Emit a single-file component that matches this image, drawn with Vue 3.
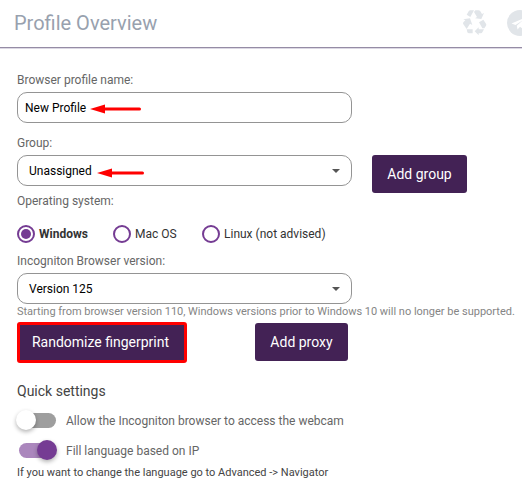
<script setup>
import { ref } from 'vue'

const profileName = ref('New Profile')
const selectedOs = ref('windows')

const systems = [
  { id: 'windows', label: 'Windows' },
  { id: 'mac', label: 'Mac OS' },
  { id: 'linux', label: 'Linux (not advised)' },
]

const settings = ref([
  { id: 'webcam', label: 'Allow the Incogniton browser to access the webcam', on: false },
  { id: 'language', label: 'Fill language based on IP', on: true },
])
</script>

<template>
  <div class="profile-page">
    <header class="page-header">
      <h1 class="page-title">Profile Overview</h1>
      <div class="header-icons">
        <svg class="header-icon" width="26" height="26" viewBox="0 0 78 78">
          <path d="M14 14 20 4Q22 1 25 1H36L25 21ZM40 1H49Q53 1 55 4L60 12 66 9 58 27 39 25 45 21 36 6Z" />
          <path d="M4 28 24 25 31 45 24 41 14 57 4 43Q2 40 4 37L10 31ZM51 37 64 29 72 41Q74 44 72 47L67 55H61Z" />
          <path d="M14 58H32V70H21Q18 70 16 67ZM38 64 50 52V58H66L61 67Q60 70 57 70H50V76Z" />
        </svg>
        <svg class="header-icon" width="26" height="26" viewBox="0 0 26 26">
          <circle cx="13" cy="13" r="13" />
          <path class="plane" d="M4.500 13.500 20 7 17.500 20 13 16.800 10.500 19.500 9.800 15.800 16 10 8.500 15Z" />
        </svg>
      </div>
    </header>

    <main class="profile-form">
      <label class="field-label name-label">Browser profile name:</label>
      <div class="field name-field">
        <span>{{ profileName }}</span>
        <svg class="arrow" width="52" height="10" viewBox="0 0 52 10">
          <path d="M0 5 15 .5V9.500Z" />
          <path d="M14 3.500H49.500a1.500 1.500 0 0 1 0 3H14Z" />
        </svg>
      </div>

      <div class="group-row">
        <div>
          <label class="field-label group-label">Group:</label>
          <div class="field select-field">
            <span>Unassigned</span>
            <svg class="arrow" width="48" height="10" viewBox="0 0 48 10">
              <path d="M0 5 15 .5V9.500Z" />
              <path d="M14 3.500H45.500a1.500 1.500 0 0 1 0 3H14Z" />
            </svg>
            <span class="caret"></span>
          </div>
        </div>
        <button class="btn group-btn">Add group</button>
      </div>

      <label class="field-label">Operating system:</label>
      <div class="os-list">
        <div
          v-for="os in systems"
          :key="os.id"
          class="os-option"
          :class="[`os-option--${os.id}`, { 'os-option--active': selectedOs === os.id }]"
          @click="selectedOs = os.id"
        >
          <span class="radio"></span>
          <span class="os-name">{{ os.label }}</span>
        </div>
      </div>

      <label class="field-label version-label">Incogniton Browser version:</label>
      <div class="field select-field">
        <span>Version 125</span>
        <span class="caret"></span>
      </div>
      <p class="hint">
        Starting from browser version 110, Windows versions prior to Windows 10 will no longer be supported.
      </p>

      <div class="actions">
        <button class="btn btn--outlined">Randomize fingerprint</button>
        <button class="btn proxy-btn">Add proxy</button>
      </div>

      <h2 class="section-title">Quick settings</h2>
      <div
        v-for="item in settings"
        :key="item.id"
        class="setting"
        @click="item.on = !item.on"
      >
        <span class="toggle" :class="{ 'toggle--on': item.on }">
          <span class="knob"></span>
        </span>
        <span class="setting-label">{{ item.label }}</span>
      </div>
      <p class="note">If you want to change the language go to Advanced -&gt; Navigator</p>
    </main>
  </div>
</template>

<style>
body {
  background: #fff;
  overflow: hidden;
}
</style>

<style scoped>
.profile-page {
  width: 522px;
  height: 495px;
  overflow: hidden;
  background: #fff;
  font-family: Roboto, "Liberation Sans", sans-serif;
  font-size: 12px;
  color: #333;
}

.profile-page * {
  box-sizing: border-box;
  white-space: nowrap;
}

.page-header {
  display: flex;
  justify-content: space-between;
  height: 49px;
  border-bottom: 1px solid #dcd8e4;
  box-shadow: inset 0 -1px #958ca5;
}

.page-title {
  margin: 0 0 0 14px;
  font-size: 20px;
  font-weight: 400;
  line-height: 46px;
  color: #98a1ae;
}

.header-icons {
  display: flex;
  gap: 19px;
  width: 60px;
  padding-top: 10px;
}

.header-icon {
  flex: none;
  fill: #e1e5e9;
}

.plane {
  fill: #fff;
}

.profile-form {
  padding: 23px 0 0 17px;
}

.field-label {
  display: block;
  height: 16px;
  line-height: 16px;
  color: #666;
}

.name-label {
  margin-bottom: 4px;
}

.field {
  display: flex;
  align-items: center;
  width: 335px;
  height: 31px;
  padding: 0 11px 0 7px;
  border: 1px solid #949494;
  border-radius: 10px;
  color: #000;
}

.select-field {
  padding-left: 11px;
}

.arrow {
  margin: 3px 0 0 4px;
  fill: #f00;
}

.select-field .arrow {
  margin: 5px 0 0 5px;
}

.caret {
  margin-left: auto;
  border: 4px solid transparent;
  border-top-color: #555;
  border-bottom: 0;
}

.group-row {
  display: flex;
  align-items: flex-start;
  gap: 20px;
  padding-top: 12px;
}

.group-label {
  margin-bottom: 4px;
}

.btn {
  height: 38px;
  padding: 0;
  border: 0;
  border-radius: 3px;
  background: #432255;
  color: #fff;
  font-family: inherit;
  font-size: 14px;
}

.group-btn {
  width: 95px;
  margin-top: 20px;
}

.os-list {
  display: flex;
  height: 18px;
  margin-top: 16px;
}

.os-option {
  display: flex;
  align-items: center;
  gap: 4px;
}

.os-option--windows {
  width: 96px;
}

.os-option--mac {
  width: 89px;
}

.radio {
  display: grid;
  place-items: center;
  width: 18px;
  height: 18px;
  border: 2px solid #753c93;
  border-radius: 50%;
}

.os-option--active .radio::after {
  content: '';
  width: 10px;
  height: 10px;
  border-radius: 50%;
  background: #753c93;
}

.os-option--active .os-name {
  font-weight: 700;
}

.version-label {
  margin: 10px 0 4px;
}

.hint {
  margin: 0;
  height: 18px;
  font-size: 11px;
  line-height: 16px;
  letter-spacing: -0.01px;
  color: #858585;
}

.actions {
  display: flex;
  align-items: flex-start;
  gap: 68px;
  height: 41px;
}

.btn--outlined {
  width: 170px;
  height: 41px;
  padding: 0 3px 2px 0;
  border: 3px solid #f00;
}

.proxy-btn {
  width: 93px;
  margin-top: 1px;
}

.section-title {
  margin: 18px 0 18px;
  font-size: 14px;
  font-weight: 400;
  line-height: 20px;
  color: #444;
}

.setting {
  display: flex;
  align-items: center;
  height: 14px;
  margin: -6px 0 22px;
}

.toggle {
  display: flex;
  align-items: center;
  width: 37px;
  height: 15px;
  margin: 0 10px 0 2px;
  border-radius: 8px;
  background: #9e9e9e;
}

.toggle--on {
  justify-content: flex-end;
  background: #ab87bd;
}

.knob {
  flex: none;
  width: 20px;
  height: 20px;
  margin-left: -3px;
  border-radius: 50%;
  background: #fff;
  box-shadow: 0 2px 4px rgba(0, 0, 0, 0.3);
}

.toggle--on .knob {
  margin-right: -1px;
  background: #753c93;
}

.setting-label {
  padding-top: 1px;
  color: #666;
}

.note {
  margin: -14px 0 0;
  font-size: 11px;
  line-height: 16px;
  color: #444;
}
</style>
